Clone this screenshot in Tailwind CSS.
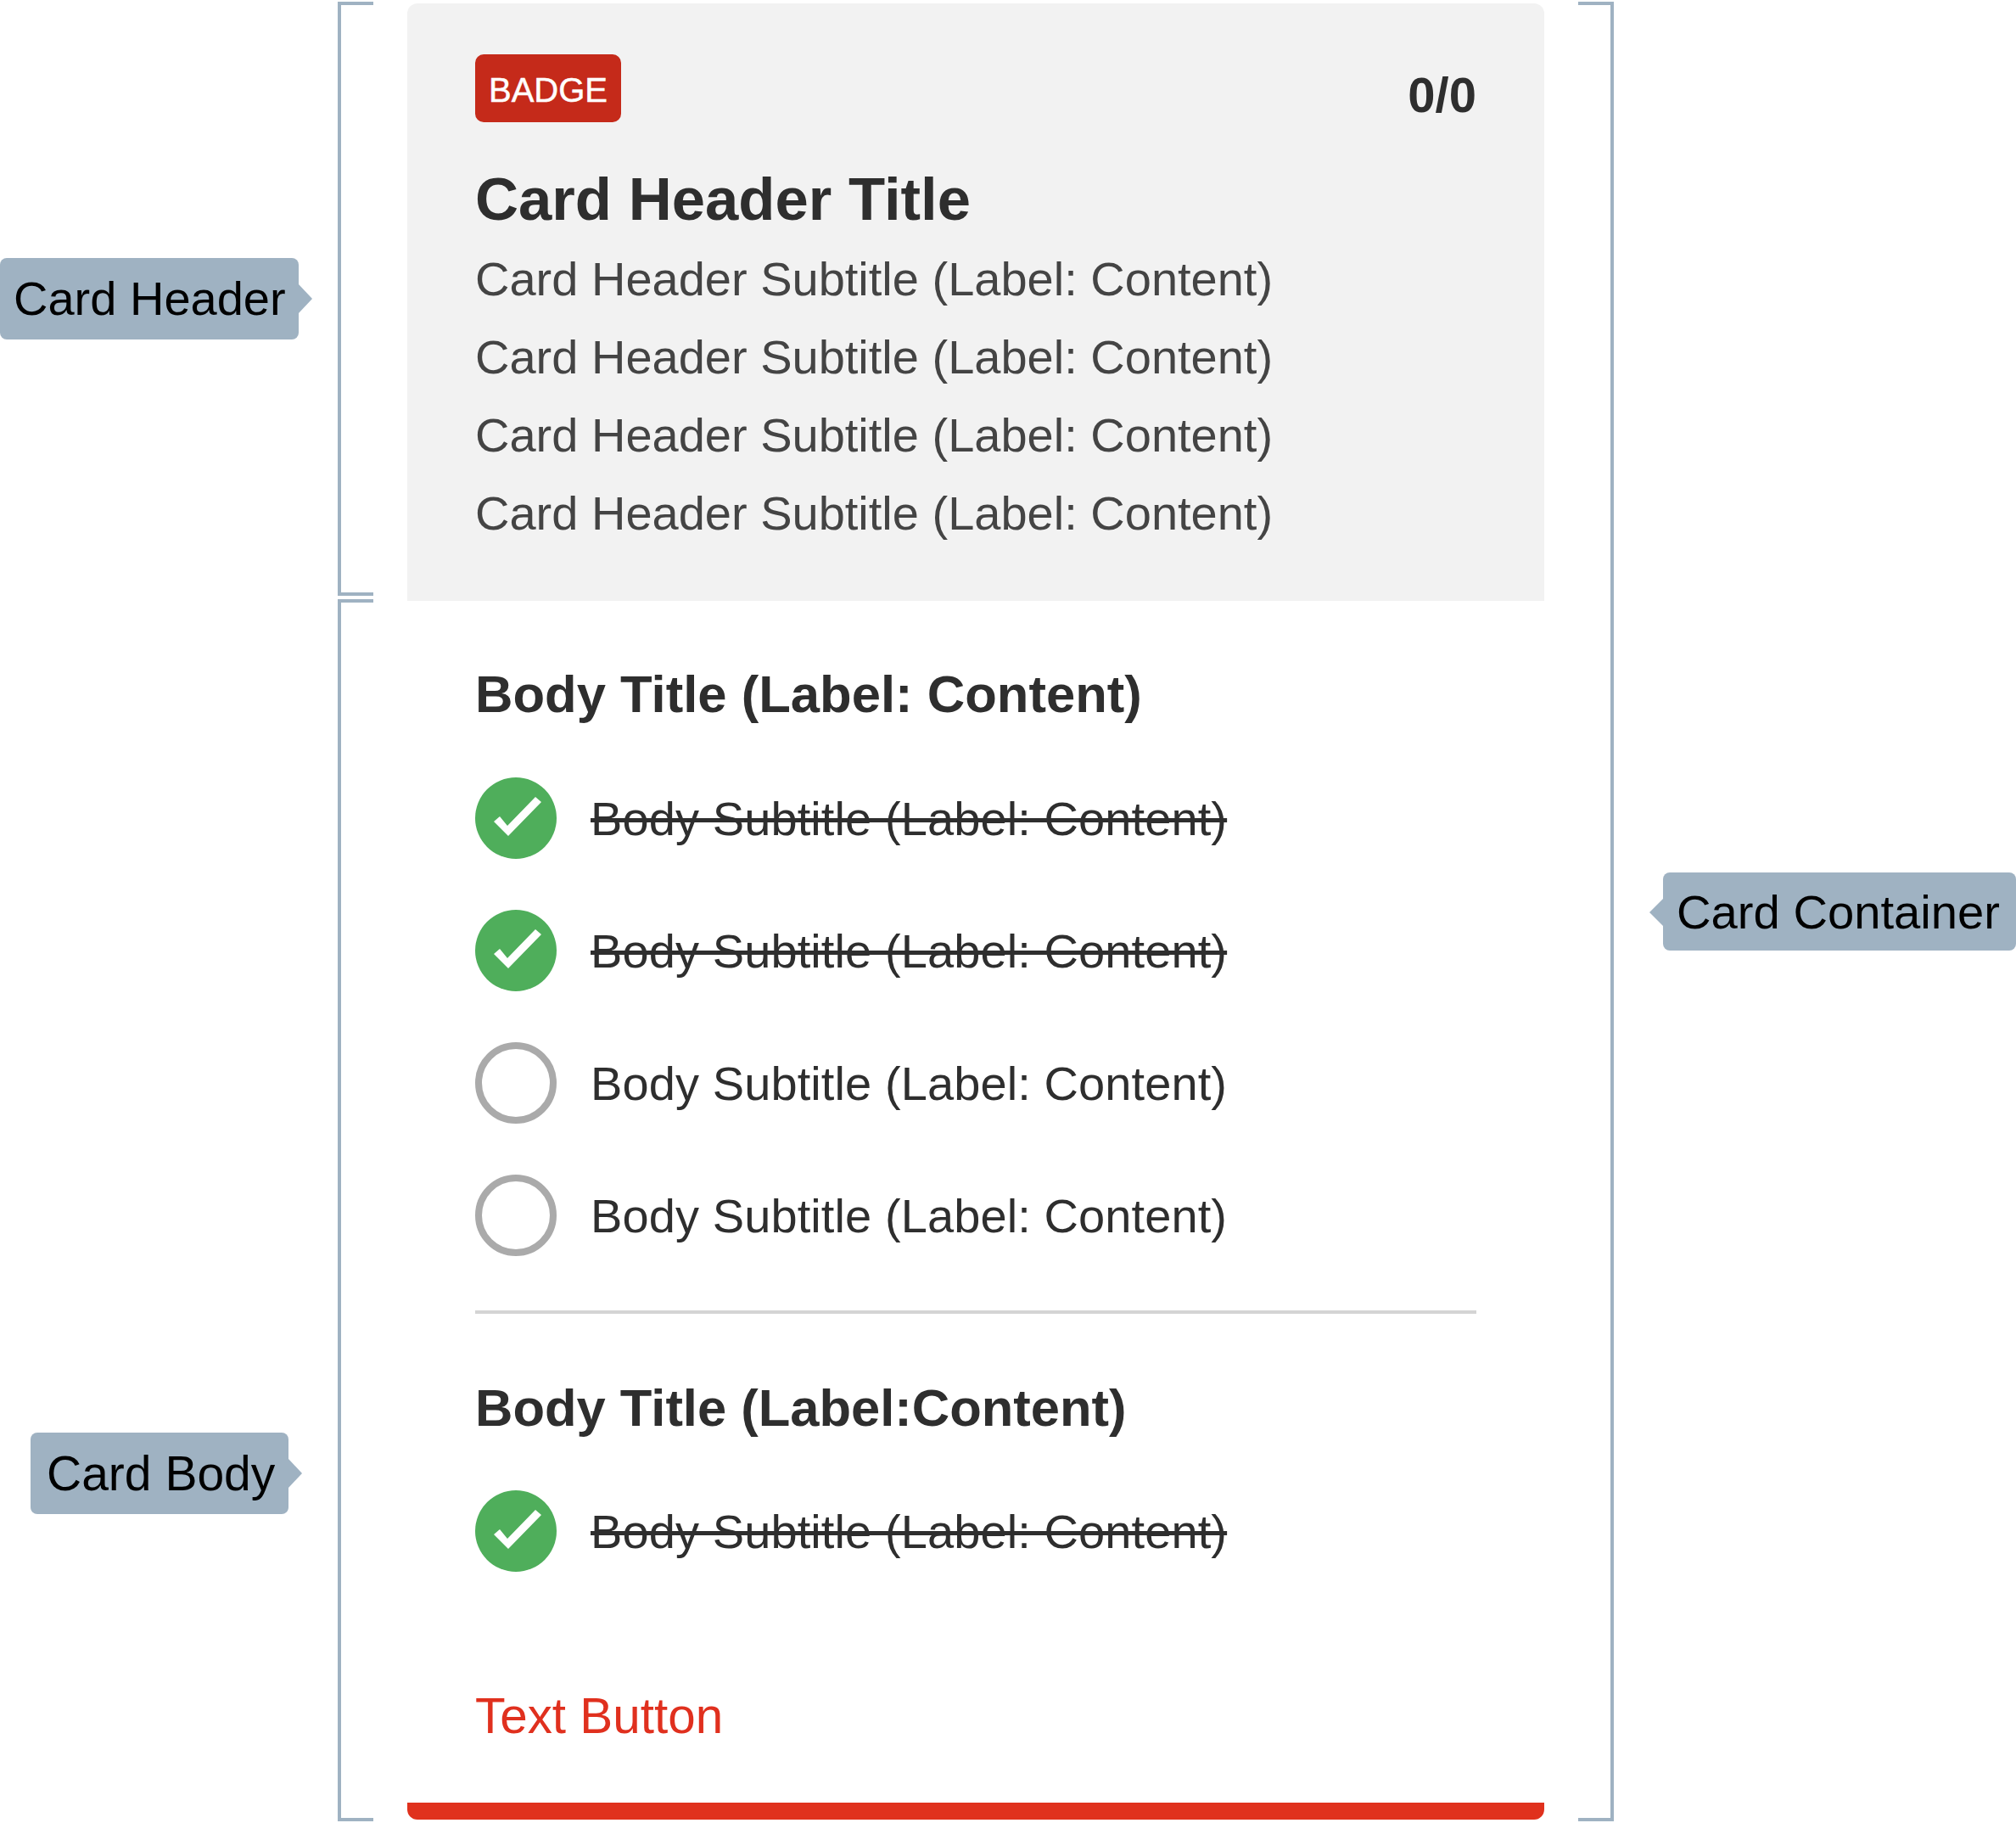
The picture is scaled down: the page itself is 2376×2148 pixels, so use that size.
<!DOCTYPE html>
<html>
<head>
<meta charset="utf-8">
<script src="https://cdn.jsdelivr.net/npm/@tailwindcss/browser@4"></script>
</head>
<body class="bg-white">
<div class="relative w-[2376px] h-[2148px] overflow-hidden bg-white font-['Liberation_Sans',Arial,sans-serif] text-[56px]">

  <!-- annotation brackets -->
  <div class="absolute left-[398px] top-[2px] w-[42px] h-[700px] border-l-4 border-y-4 border-[#9fb2c2]"></div>
  <div class="absolute left-[398px] top-[706px] w-[42px] h-[1440px] border-l-4 border-y-4 border-[#9fb2c2]"></div>
  <div class="absolute left-[1860px] top-[2px] w-[42px] h-[2144px] border-r-4 border-y-4 border-[#9fb2c2]"></div>

  <!-- annotation tags -->
  <div class="absolute left-0 top-[304px] w-[352px] h-[96px] pl-[16px] flex items-center rounded-[8px] bg-[#9fb2c2] text-black whitespace-nowrap">
    Card Header
    <span class="absolute left-full top-[31px] w-0 h-0 border-y-[17px] border-l-[16px] border-y-transparent border-l-[#9fb2c2]"></span>
  </div>
  <div class="absolute left-[36px] top-[1688px] w-[304px] h-[96px] pl-[19px] pt-[2px] flex items-center rounded-[8px] bg-[#9fb2c2] text-black text-[57px] whitespace-nowrap">
    Card Body
    <span class="absolute left-full top-[31px] w-0 h-0 border-y-[17px] border-l-[16px] border-y-transparent border-l-[#9fb2c2]"></span>
  </div>
  <div class="absolute left-[1960px] top-[1028px] w-[416px] h-[92px] pl-[16px] pt-[2px] flex items-center rounded-[8px] bg-[#9fb2c2] text-black text-[56.2px] whitespace-nowrap">
    Card Container
    <span class="absolute right-full top-[31px] w-0 h-0 border-y-[16px] border-r-[16px] border-y-transparent border-r-[#9fb2c2]"></span>
  </div>

  <!-- card -->
  <div class="absolute left-[480px] top-[4px] w-[1340px] h-[2140px] flex flex-col">
    <div class="h-[704px] shrink-0 rounded-t-[12px] bg-[#f2f2f2] px-[80px] pt-[60px]">
      <div class="flex justify-between h-[80px]">
        <span class="flex items-center justify-center w-[172px] h-[80px] rounded-[10px] bg-[#c52a1a] text-white text-[40px] pt-[4px] [-webkit-text-stroke:0.5px_white]">BADGE</span>
        <span class="font-bold text-[#2e2e2e] text-[58px] leading-[96px]">0/0</span>
      </div>
      <h2 class="mt-[45px] text-[70.7px] leading-[92px] font-bold text-[#2e2e2e]">Card Header Title</h2>
      <div class="mt-[2px] text-[#444444] leading-[92px]">
        <p>Card Header Subtitle (Label: Content)</p>
        <p>Card Header Subtitle (Label: Content)</p>
        <p>Card Header Subtitle (Label: Content)</p>
        <p>Card Header Subtitle (Label: Content)</p>
      </div>
    </div>

    <div class="flex-1 px-[80px] pt-[64px] text-[#2e2e2e]">
      <h3 class="text-[61.6px] leading-[92px] font-bold">Body Title (Label: Content)</h3>
      <ul class="mt-[52px] flex flex-col gap-[60px]">
        <li class="flex items-center gap-[40px] h-[96px]">
          <svg class="w-[96px] h-[96px] shrink-0" viewBox="0 0 96 96"><circle cx="48" cy="48" r="48" fill="#4fae5b"/><path d="M22 52L39 69L78 29L71 23L38 57L29 46Z" fill="#fff"/></svg>
          <span class="line-through tracking-[0.1px] pt-[2px]">Body Subtitle (Label: Content)</span>
        </li>
        <li class="flex items-center gap-[40px] h-[96px]">
          <svg class="w-[96px] h-[96px] shrink-0" viewBox="0 0 96 96"><circle cx="48" cy="48" r="48" fill="#4fae5b"/><path d="M22 52L39 69L78 29L71 23L38 57L29 46Z" fill="#fff"/></svg>
          <span class="line-through tracking-[0.1px] pt-[2px]">Body Subtitle (Label: Content)</span>
        </li>
        <li class="flex items-center gap-[40px] h-[96px]">
          <span class="w-[96px] h-[96px] shrink-0 rounded-full border-[8px] border-[#aaaaaa]"></span>
          <span class="tracking-[0.1px] pt-[2px]">Body Subtitle (Label: Content)</span>
        </li>
        <li class="flex items-center gap-[40px] h-[96px]">
          <span class="w-[96px] h-[96px] shrink-0 rounded-full border-[8px] border-[#aaaaaa]"></span>
          <span class="tracking-[0.1px] pt-[2px]">Body Subtitle (Label: Content)</span>
        </li>
      </ul>
      <div class="mt-[64px] h-[4px] bg-[#d4d4d4]"></div>
      <h3 class="mt-[65px] text-[61.5px] leading-[92px] font-bold">Body Title (Label:Content)</h3>
      <div class="mt-[51px] flex items-center gap-[40px] h-[96px]">
        <svg class="w-[96px] h-[96px] shrink-0" viewBox="0 0 96 96"><circle cx="48" cy="48" r="48" fill="#4fae5b"/><path d="M22 52L39 69L78 29L71 23L38 57L29 46Z" fill="#fff"/></svg>
        <span class="line-through tracking-[0.1px] pt-[2px]">Body Subtitle (Label: Content)</span>
      </div>
      <div class="mt-[124px] leading-[92px] text-[#e0301e] text-[58.4px]">Text Button</div>
    </div>

    <div class="h-[20px] shrink-0 rounded-b-[12px] bg-[#e0311d]"></div>
  </div>
</div>
</body>
</html>
